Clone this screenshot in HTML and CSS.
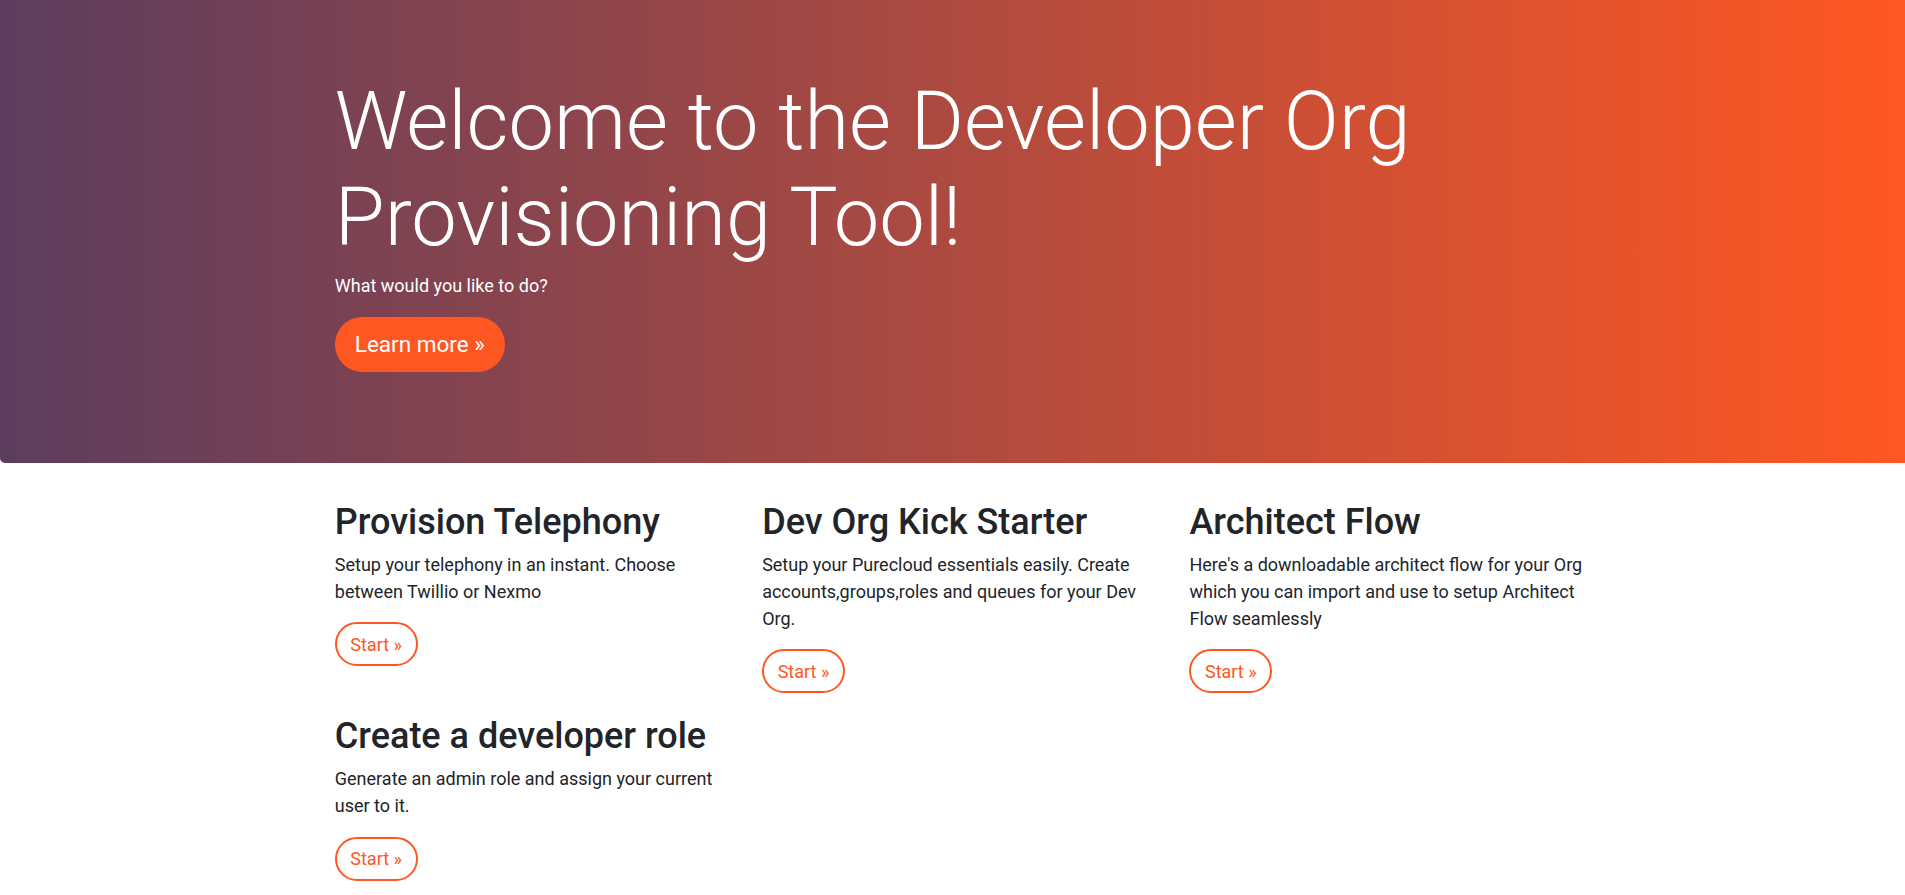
FILE: index.html
```html
<!DOCTYPE html>
<html lang="en">
<head>
<meta charset="utf-8">
<title>Developer Org Provisioning Tool</title>
<link rel="stylesheet" href="styles.css">
</head>
<body>
  <section class="hero">
    <div class="container">
      <div class="hero-inner">
        <h1 class="hero-title">Welcome to the Developer Org Provisioning Tool!</h1>
        <p class="hero-lead">What would you like to do?</p>
        <a class="btn-primary" href="#">Learn more &raquo;</a>
      </div>
    </div>
  </section>

  <main class="container">
    <div class="cards">
      <div class="card">
        <h2 class="card-title">Provision Telephony</h2>
        <p class="card-text">Setup your telephony in an instant. Choose between Twillio or Nexmo</p>
        <div class="card-action"><a class="btn-outline" href="#">Start &raquo;</a></div>
      </div>
      <div class="card">
        <h2 class="card-title">Dev Org Kick Starter</h2>
        <p class="card-text">Setup your Purecloud essentials easily. Create accounts,groups,roles and queues for your Dev Org.</p>
        <div class="card-action"><a class="btn-outline" href="#">Start &raquo;</a></div>
      </div>
      <div class="card">
        <h2 class="card-title">Architect Flow</h2>
        <p class="card-text">Here's a downloadable architect flow for your Org which you can import and use to setup Architect Flow seamlessly</p>
        <div class="card-action"><a class="btn-outline" href="#">Start &raquo;</a></div>
      </div>
      <div class="card">
        <h2 class="card-title">Create a developer role</h2>
        <p class="card-text">Generate an admin role and assign your current user to it.</p>
        <div class="card-action"><a class="btn-outline" href="#">Start &raquo;</a></div>
      </div>
    </div>
  </main>
</body>
</html>
```

FILE: styles.css
```css
* {
  box-sizing: border-box;
}

html, body {
  margin: 0;
  padding: 0;
}

body {
  font-family: Roboto, "Liberation Sans", Arial, sans-serif;
  font-size: 18px;
  line-height: 1.5;
  color: #212529;
  background: #ffffff;
}

.container {
  width: 1282px;
  margin: 0 auto;
}

.hero {
  background: linear-gradient(to right, #5c3d5e 0%, #ff5722 100%);
  border-bottom-left-radius: 5px;
  padding: 74px 0 91px;
  color: #ffffff;
}

.hero-inner {
  padding: 0 8px 0 23.3px;
}

.hero-title {
  margin: 0 0 5.5px;
  font-size: 81.2px;
  font-weight: 300;
  line-height: 96px;
  width: 1180px;
}

.hero-lead {
  margin: 0 0 18px;
  font-size: 18px;
  line-height: 27px;
}

.btn-primary {
  display: inline-block;
  background: #ff5722;
  color: #ffffff;
  text-decoration: none;
  font-size: 22.5px;
  line-height: 33px;
  padding: 11px 20px;
  border-radius: 28px;
}

.cards {
  display: grid;
  grid-template-columns: repeat(3, 1fr);
  padding-top: 38.5px;
}

.card {
  padding: 0 8px 0 23.3px;
}

.card-title {
  margin: 0 0 6.8px;
  font-size: 36px;
  font-weight: 500;
  line-height: 1.2;
}

.card-text {
  margin: 0 0 17.5px;
}

.card-action {
  margin-bottom: 22px;
}

.btn-outline {
  display: inline-block;
  color: #ff5722;
  text-decoration: none;
  font-size: 18px;
  line-height: 27px;
  padding: 6.5px 13.5px;
  border: 2px solid #ff5722;
  border-radius: 22px;
}
```
